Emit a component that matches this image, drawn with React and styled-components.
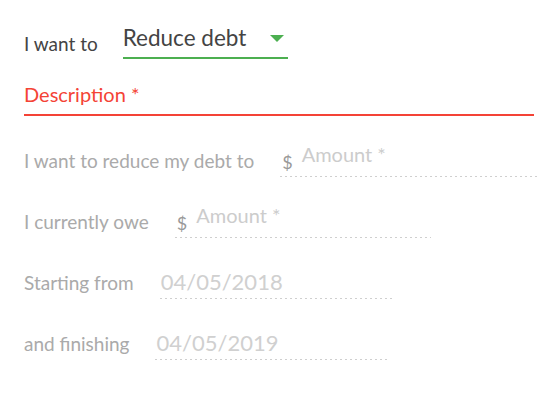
import React from 'react';
import styled, { createGlobalStyle } from 'styled-components';

const GlobalStyle = createGlobalStyle`
  body {
    margin: 0;
    background: #ffffff;
    font-family: Lato, 'Open Sans', sans-serif;
  }
`;

const Container = styled.div`
  padding: 24px 0 0 24px;
`;

const GoalRow = styled.div`
  display: flex;
  align-items: flex-end;
  gap: 25px;
`;

const GoalLabel = styled.span`
  font-size: 19px;
  line-height: 24px;
  color: #444;
  padding-bottom: 3px;
`;

const Select = styled.div`
  display: flex;
  align-items: center;
  justify-content: space-between;
  width: 161px;
  padding: 1px 4px 6px 0;
  border-bottom: 2px solid #4caf50;
  font-size: 22.5px;
  line-height: 26px;
  color: #444;
`;

const Caret = styled.span`
  width: 0;
  height: 0;
  border-left: 7px solid transparent;
  border-right: 7px solid transparent;
  border-top: 7px solid #4caf50;
`;

const Description = styled.div`
  margin-top: 23px;
  width: 510px;
  padding-bottom: 8px;
  border-bottom: 2px solid #f44336;
  font-size: 20px;
  line-height: 24px;
  color: #f44336;
`;

const Rows = styled.div`
  display: flex;
  flex-direction: column;
  gap: 25px;
  margin-top: 25px;
`;

const FieldRow = styled.div`
  display: flex;
  align-items: flex-end;
  height: 36px;
  gap: ${(p) => p.$gap}px;
`;

const RowLabel = styled.span`
  font-size: 19px;
  line-height: 24px;
  color: #aaa;
  padding-bottom: 4px;
  white-space: nowrap;
`;

const Field = styled.div`
  display: flex;
  align-items: flex-end;
  box-sizing: border-box;
  height: 100%;
  width: ${(p) => p.$width}px;
  padding-left: ${(p) => p.$inset}px;
  background-image: linear-gradient(to right, #cfcfcf 40%, rgba(255, 255, 255, 0) 0);
  background-position: left bottom;
  background-size: 5px 1px;
  background-repeat: repeat-x;
`;

const Dollar = styled.span`
  font-size: 18px;
  line-height: 20px;
  color: #999;
  margin: 0 9px 5px 0;
`;

const Placeholder = styled.span`
  font-size: 20px;
  line-height: 24px;
  color: #ccc;
  margin-bottom: 11px;
`;

const DateValue = styled.span`
  font-size: 22px;
  line-height: 26px;
  color: #d0d0d0;
  margin-bottom: 4px;
`;

const rows = [
  { label: 'I want to reduce my debt to', kind: 'amount', width: 258 },
  { label: 'I currently owe', kind: 'amount', width: 256 },
  { label: 'Starting from', kind: 'date', value: '04/05/2018', width: 234 },
  { label: 'and finishing', kind: 'date', value: '04/05/2019', width: 234 },
];

const App = () => {
  return (
    <Container>
      <GlobalStyle />
      <GoalRow>
        <GoalLabel>I want to</GoalLabel>
        <Select>
          <span>Reduce debt</span>
          <Caret />
        </Select>
      </GoalRow>
      <Description>Description *</Description>
      <Rows>
        {rows.map((row) => (
          <FieldRow key={row.label} $gap={26}>
            <RowLabel>{row.label}</RowLabel>
            {row.kind === 'amount' ? (
              <Field $width={row.width} $inset={2}>
                <Dollar>$</Dollar>
                <Placeholder>Amount *</Placeholder>
              </Field>
            ) : (
              <Field $width={row.width} $inset={1}>
                <DateValue>{row.value}</DateValue>
              </Field>
            )}
          </FieldRow>
        ))}
      </Rows>
    </Container>
  );
};

export default App;
